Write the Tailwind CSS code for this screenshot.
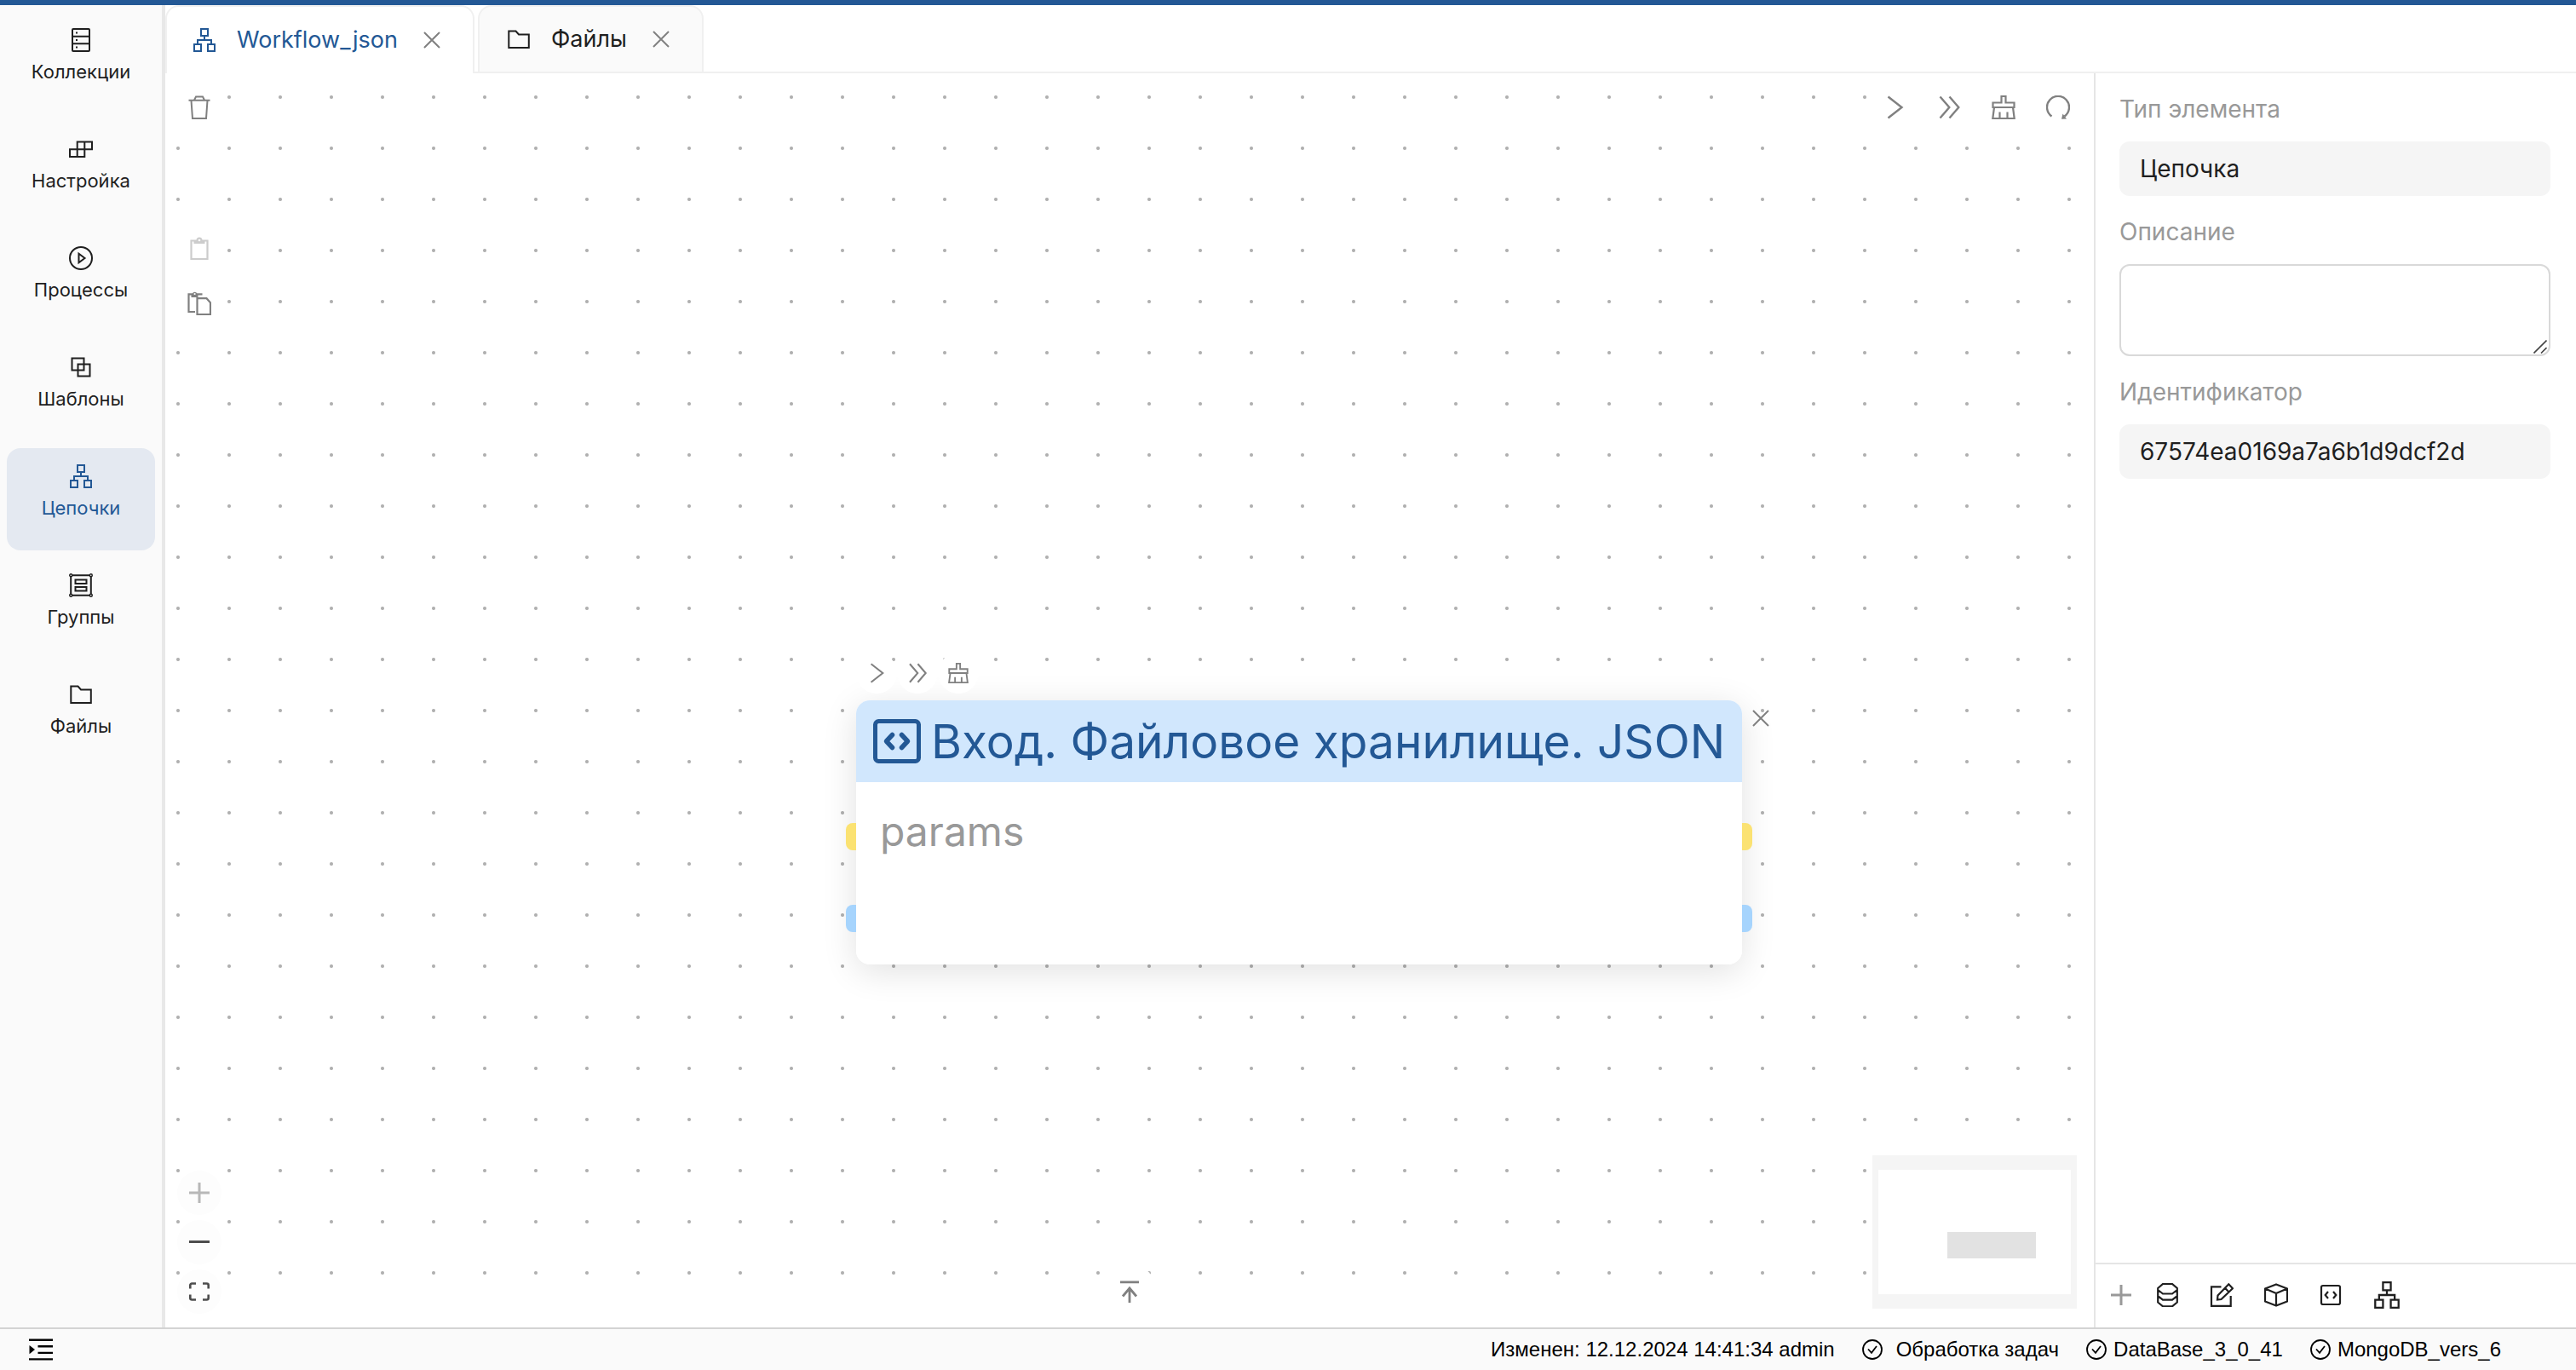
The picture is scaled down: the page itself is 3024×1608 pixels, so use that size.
<!DOCTYPE html>
<html lang="ru">
<head>
<meta charset="utf-8">
<title>Workflow_json</title>
<script src="https://cdn.jsdelivr.net/npm/@tailwindcss/browser@4"></script>
</head>
<body class="flex h-screen flex-col overflow-hidden bg-white font-['Inter',sans-serif] text-[28px] leading-[44px] text-[#1f1f1f]">

<svg class="hidden" aria-hidden="true">
  <defs>
    <symbol id="server" viewBox="0 0 28 28"><g fill="none" stroke="currentColor" stroke-width="2"><rect x="4" y="1" width="20" height="26" rx="1"/><path d="M4 9.7h20M4 18.3h20"/></g><path fill="currentColor" d="M8 4.6h2v2H8zM8 13h2v2H8zM8 21.4h2v2H8z"/></symbol>
    <symbol id="blocks" viewBox="0 0 28 28"><path fill="none" stroke="currentColor" stroke-width="2" d="M9.7 5.5H27v8.7H9.7zM1 14.2h17.3v8.7H1zM18.3 5.5v8.7M9.7 14.2v8.7"/></symbol>
    <symbol id="process" viewBox="0 0 28 28"><g fill="none" stroke="currentColor" stroke-width="2"><circle cx="14" cy="14" r="13"/><path d="M11.5 8.8v10.4l7-5.2z"/></g></symbol>
    <symbol id="templates" viewBox="0 0 28 28"><path fill="none" stroke="currentColor" stroke-width="2" d="M3.5 3.5h14v14h-14zM10.500 10.500h14v14h-14z"/></symbol>
    <symbol id="sitemap" viewBox="0 0 28 28"><path fill="none" stroke="currentColor" stroke-width="2" d="M10 1h8v8h-8zM2 19h8v8H2zM18 19h8v8h-8zM14 9v5M6 19v-5h16v5"/></symbol>
    <symbol id="groups" viewBox="0 0 28 28"><g fill="none" stroke="currentColor"><path stroke-width="2" d="M2.200 2.200h23.600v23.600H2.200zM7.500 7.500h13v4.500h-13zM7.500 16h13v4.500h-13z"/></g><g fill="#fafafa" stroke="currentColor" stroke-width="1.400"><circle cx="2.200" cy="2.200" r="1.500"/><circle cx="25.800" cy="2.200" r="1.500"/><circle cx="2.200" cy="25.800" r="1.500"/><circle cx="25.800" cy="25.800" r="1.500"/></g></symbol>
    <symbol id="folder" viewBox="0 0 28 28"><path fill="none" stroke="currentColor" stroke-width="2" d="M2.300 4.500h8.200l3.500 4h11.800v15.500H2.300z"/></symbol>
    <symbol id="close" viewBox="0 0 20 20"><path fill="none" stroke="currentColor" stroke-width="2" d="M1 1l18 18M19 1L1 19"/></symbol>
    <symbol id="trash" viewBox="0 0 28 28"><path fill="none" stroke="currentColor" stroke-width="2" d="M1.500 5.800h25M8 5.500l2-4h8l2 4M4.500 6L6 27h16L23.500 6"/></symbol>
    <symbol id="clipboard" viewBox="0 0 28 28"><path fill="none" stroke="currentColor" stroke-width="2.200" d="M4.500 4.500h19V26h-19z"/><path fill="currentColor" d="M7.500 4h3a3.500 3.500 0 0 1 7 0h3v4h-13z"/><circle cx="14" cy="4" r="1.300" fill="#fff"/></symbol>
    <symbol id="paste" viewBox="0 0 28 28"><path fill="none" stroke="currentColor" stroke-width="2.200" d="M9 24H1.500V3.300H17.500M11.500 8.200h11l4.500 5v14H11.500z"/><path fill="currentColor" d="M4.500 3h1.300a2.900 2.900 0 0 1 5.600 0h1.100v4h-8z"/><circle cx="8.600" cy="3" r="1.100" fill="#fff"/></symbol>
    <symbol id="run" viewBox="0 0 28 28"><path fill="none" stroke="currentColor" stroke-width="2.400" d="M6.500 1.500L22.500 14 6.500 26.500"/></symbol>
    <symbol id="run-all" viewBox="0 0 28 28"><path fill="none" stroke="currentColor" stroke-width="2.400" d="M3.500 1.500L14.300 14 3.500 26.500M14.500 1.500L25.300 14 14.500 26.500"/></symbol>
    <symbol id="broom" viewBox="0 0 28 28"><path fill="none" stroke="currentColor" stroke-width="2.200" d="M1.500 8.500h10V1h5v7.500h10v5.500h-25zM3 14L1.300 27h25.400L25 14M9.500 19.500V27M18.500 19.500V27"/></symbol>
    <symbol id="reload" viewBox="0 0 28 28"><path fill="none" stroke="currentColor" stroke-width="2.400" d="M6.500 24.500A13 13 0 1 1 21.500 24.500"/><path fill="currentColor" d="M19.500 21.500l-1.500 6.300 6-.4z"/></symbol>
    <symbol id="plus" viewBox="0 0 24 24"><path fill="none" stroke="currentColor" stroke-width="3" d="M12 0v24M0 12h24"/></symbol>
    <symbol id="minus" viewBox="0 0 24 24"><path fill="none" stroke="currentColor" stroke-width="3" d="M0 11.500h24"/></symbol>
    <symbol id="fit" viewBox="0 0 24 24"><path fill="none" stroke="currentColor" stroke-width="2.600" d="M1.300 8.500V4.500a2 2 0 0 1 2-2H8M16 2.500h4.700a2 2 0 0 1 2 2v4M22.700 15.500v4a2 2 0 0 1-2 2H16M8 21.500H3.300a2 2 0 0 1-2-2v-4"/></symbol>
    <symbol id="to-top" viewBox="0 0 24 28"><path fill="none" stroke="currentColor" stroke-width="2.800" d="M1 2.800h22M12 27V10M4 19.500L12 10l8 9.500"/></symbol>
    <symbol id="database" viewBox="0 0 28 28"><path fill="none" stroke="currentColor" stroke-width="2.200" d="M3.200 6L9 1h11l5.800 5v16.500L20 27.300H9l-5.800-4.800zM3.200 8L9 12.500h11L25.800 8M3.200 15.200L9 19.700h11l5.800-4.500"/></symbol>
    <symbol id="edit" viewBox="0 0 28 28"><path fill="none" stroke="currentColor" stroke-width="2.200" d="M13.500 4.300H2v22.500h22.700V15M9 19.500l.500-5L22.300 1.300l4.700 5L13.500 19zM18 5.800l4.500 4.700"/></symbol>
    <symbol id="cube" viewBox="0 0 28 28"><path fill="none" stroke="currentColor" stroke-width="2.200" stroke-linejoin="round" d="M14 1.400L27 6.600v14.800L14 26.600 1 21.400V6.600zM1 6.600l13 5.300 13-5.300M14 12v14.500"/></symbol>
    <symbol id="code" viewBox="0 0 28 28"><path fill="none" stroke="currentColor" stroke-width="2.200" d="M5 3h18a2 2 0 0 1 2 2v18a2 2 0 0 1-2 2H5a2 2 0 0 1-2-2V5a2 2 0 0 1 2-2zM11 10l-3.300 4 3.300 4M17 10l3.300 4-3.300 4"/></symbol>
    <symbol id="code-wide" viewBox="0 0 56 52"><g fill="none" stroke="currentColor" stroke-width="5"><rect x="2.500" y="2.500" width="51" height="47" rx="4"/><path stroke-width="5.500" stroke-linecap="round" stroke-linejoin="round" d="M22.500 18.500L15.500 26l7 7.500M33.500 18.500l7 7.500-7 7.500"/></g></symbol>
    <symbol id="console" viewBox="0 0 28 28"><path fill="none" stroke="currentColor" stroke-width="2.400" d="M0 2.800h28M10.500 10.300H28M10.500 17.900H28M0 25.400h28"/><path fill="currentColor" d="M.500 9v10.200l6.500-5.100z"/></symbol>
    <symbol id="check" viewBox="0 0 24 24"><g fill="none" stroke="currentColor" stroke-width="1.800"><circle cx="12" cy="12" r="11"/><path d="M7 11.500l4 4.300 6-7.800"/></g></symbol>
    <symbol id="grip" viewBox="0 0 16 16"><path fill="none" stroke="currentColor" stroke-width="1.600" d="M.500 15.500l15-15M9 15.500L15.500 9"/></symbol>
  </defs>
</svg>

<div class="h-[6px] shrink-0 bg-[#235895]"></div>

<div class="flex min-h-0 flex-1">
  <nav class="flex w-[194px] shrink-0 flex-col gap-2 border-r-4 border-[#e8e8e8] bg-[#fafafa] p-2 text-[22px] leading-8">
    <a href="#" class="flex h-[120px] flex-col items-center gap-[7px] rounded-2xl pt-[19px]"><svg class="size-7"><use href="#server"/></svg>Коллекции</a>
    <a href="#" class="flex h-[120px] flex-col items-center gap-[7px] rounded-2xl pt-[19px]"><svg class="size-7"><use href="#blocks"/></svg>Настройка</a>
    <a href="#" class="flex h-[120px] flex-col items-center gap-[7px] rounded-2xl pt-[19px]"><svg class="size-7"><use href="#process"/></svg>Процессы</a>
    <a href="#" class="flex h-[120px] flex-col items-center gap-[7px] rounded-2xl pt-[19px]"><svg class="size-7"><use href="#templates"/></svg>Шаблоны</a>
    <a href="#" aria-current="page" class="flex h-[120px] flex-col items-center gap-[7px] rounded-2xl bg-[#e4e9f1] pt-[19px] text-[#235895]"><svg class="size-7"><use href="#sitemap"/></svg>Цепочки</a>
    <a href="#" class="flex h-[120px] flex-col items-center gap-[7px] rounded-2xl pt-[19px]"><svg class="size-7"><use href="#groups"/></svg>Группы</a>
    <a href="#" class="flex h-[120px] flex-col items-center gap-[7px] rounded-2xl pt-[19px]"><svg class="size-7"><use href="#folder"/></svg>Файлы</a>
  </nav>

  <div class="flex min-w-0 flex-1 flex-col">
    <div class="flex h-20 shrink-0 text-[27px]" role="tablist">
      <div class="flex items-center rounded-t-2xl border-2 border-b-0 border-[#f0f0f0] pr-[38px] pl-[30px] text-[#235895]">
        <svg class="size-7"><use href="#sitemap"/></svg>
        <button class="ml-6" role="tab" aria-selected="true">Workflow_json</button>
        <button class="ml-[30px] text-[#808080]" aria-label="Закрыть Workflow_json"><svg class="size-5"><use href="#close"/></svg></button>
      </div>
      <div class="w-1 border-b-2 border-[#f0f0f0]"></div>
      <div class="flex items-center rounded-t-2xl border-2 border-[#f0f0f0] bg-[#fafafa] pr-[38px] pl-8">
        <svg class="size-7"><use href="#folder"/></svg>
        <button class="ml-6" role="tab" aria-selected="false">Файлы</button>
        <button class="ml-[30px] text-[#808080]" aria-label="Закрыть Файлы"><svg class="size-5"><use href="#close"/></svg></button>
      </div>
      <div class="flex-1 border-b-2 border-[#f0f0f0]"></div>
    </div>

    <div class="flex min-h-0 flex-1">
      <main class="relative min-w-0 flex-1 pb-2 text-[#808080]">
        <div class="h-full bg-[radial-gradient(circle,#b0b0b0_1.5px,transparent_2.5px)] bg-[length:60px_60px] bg-[position:-15px_-2px]"></div>

        <div class="absolute top-[14px] left-3 flex h-[52px] w-14 items-center justify-center bg-white"><button aria-label="Удалить"><svg class="size-7"><use href="#trash"/></svg></button></div>
        <div class="absolute top-[180px] left-3 flex flex-col gap-3 bg-white px-[2px]">
          <button class="flex size-[52px] items-center justify-center text-[#cccccc]" aria-label="Вставить" disabled><svg class="size-7"><use href="#clipboard"/></svg></button>
          <button class="flex size-[52px] items-center justify-center" aria-label="Копировать"><svg class="size-7"><use href="#paste"/></svg></button>
        </div>

        <div class="absolute top-[14px] right-4 flex gap-3 bg-white">
          <button class="flex size-[52px] items-center justify-center" aria-label="Запустить"><svg class="size-7"><use href="#run"/></svg></button>
          <button class="flex size-[52px] items-center justify-center" aria-label="Запустить всё"><svg class="size-7"><use href="#run-all"/></svg></button>
          <button class="flex size-[52px] items-center justify-center" aria-label="Очистить"><svg class="size-7"><use href="#broom"/></svg></button>
          <button class="flex size-[52px] items-center justify-center" aria-label="Обновить"><svg class="size-7"><use href="#reload"/></svg></button>
        </div>

        <article class="absolute top-[736px] left-[811px] rounded-2xl shadow-[0_8px_40px_rgba(0,0,0,0.12)]">
          <div class="absolute top-[144px] -left-3 h-8 w-6 rounded-lg bg-[#fbe272]"></div>
          <div class="absolute top-[240px] -left-3 h-8 w-6 rounded-lg bg-[#a6d4fd]"></div>
          <div class="absolute top-[144px] -right-3 h-8 w-6 rounded-lg bg-[#fbe272]"></div>
          <div class="absolute top-[240px] -right-3 h-8 w-6 rounded-lg bg-[#a6d4fd]"></div>
          <div class="relative h-[310px] w-[1040px] overflow-hidden rounded-2xl bg-white">
            <h2 class="flex h-24 items-center gap-3 bg-[#d1e7fd] px-5 text-[55px] leading-[96px] whitespace-nowrap text-[#235895]"><svg class="h-[52px] w-[56px] shrink-0"><use href="#code-wide"/></svg>Вход. Файловое хранилище. JSON</h2>
            <p class="px-7 pt-[26px] text-[48px] leading-[64px] text-[#999999]">params</p>
          </div>
          <div class="absolute -top-14 left-0 flex">
            <button class="flex size-12 items-center justify-center rounded-full bg-white" aria-label="Запустить узел"><svg class="size-6"><use href="#run"/></svg></button>
            <button class="flex size-12 items-center justify-center rounded-full bg-white" aria-label="Запустить цепочку"><svg class="size-6"><use href="#run-all"/></svg></button>
            <button class="flex size-12 items-center justify-center rounded-full bg-white" aria-label="Очистить узел"><svg class="size-6"><use href="#broom"/></svg></button>
          </div>
          <button class="absolute top-[11px] -right-8" aria-label="Удалить узел"><svg class="size-5"><use href="#close"/></svg></button>
        </article>

        <div class="absolute bottom-4 left-[14px] flex flex-col gap-[6px] text-[#4d4d4d]">
          <button class="flex size-[52px] items-center justify-center rounded-full bg-[#fdfdfd] text-[#b8b8b8]" aria-label="Увеличить"><svg class="size-6"><use href="#plus"/></svg></button>
          <button class="flex size-[52px] items-center justify-center rounded-full bg-[#fdfdfd]" aria-label="Уменьшить"><svg class="size-6"><use href="#minus"/></svg></button>
          <button class="flex size-[52px] items-center justify-center rounded-full bg-[#fdfdfd]" aria-label="По размеру"><svg class="size-6"><use href="#fit"/></svg></button>
        </div>

        <div class="absolute inset-x-0 bottom-[10px] flex justify-center"><button class="flex size-16 items-center justify-center rounded-full bg-white" aria-label="Развернуть панель"><svg class="h-7 w-6"><use href="#to-top"/></svg></button></div>

        <div class="absolute right-5 bottom-[22px] h-[180px] w-[240px] bg-[#f5f5f5] px-[7px] py-[17px]">
          <div class="relative h-full bg-white"><div class="absolute top-[73px] left-[81px] h-[31px] w-[104px] bg-[#e2e2e2]"></div></div>
        </div>
      </main>

      <aside class="flex w-[566px] shrink-0 flex-col border-l-2 border-[#e5e5e5]">
        <form class="flex flex-1 flex-col gap-5 pt-5 pr-[30px] pl-7">
          <div class="flex flex-col gap-4">
            <label for="type" class="text-[#999999]">Тип элемента</label>
            <input id="type" value="Цепочка" readonly class="h-16 rounded-xl bg-[#f5f5f5] px-6">
          </div>
          <div class="relative flex flex-col gap-4">
            <label for="description" class="text-[#999999]">Описание</label>
            <textarea id="description" class="h-[108px] resize-none rounded-xl border-2 border-[#d9d9d9] px-6"></textarea>
            <svg class="absolute right-1 bottom-[3px] size-4 text-[#444444]"><use href="#grip"/></svg>
          </div>
          <div class="flex flex-col gap-4">
            <label for="ident" class="text-[#999999]">Идентификатор</label>
            <input id="ident" value="67574ea0169a7a6b1d9dcf2d" readonly class="h-16 rounded-xl bg-[#f5f5f5] px-6">
          </div>
        </form>
        <div class="flex h-[76px] items-center gap-9 border-t-2 border-[#e5e5e5] pb-[2px] pl-[18px]">
          <button class="mr-[-8px] text-[#999999]" aria-label="Добавить"><svg class="size-6"><use href="#plus"/></svg></button>
          <button aria-label="База данных"><svg class="size-7"><use href="#database"/></svg></button>
          <button aria-label="Правка"><svg class="size-7"><use href="#edit"/></svg></button>
          <button aria-label="Объект"><svg class="size-7"><use href="#cube"/></svg></button>
          <button aria-label="Код"><svg class="size-7"><use href="#code"/></svg></button>
          <button aria-label="Цепочка"><svg class="size-8"><use href="#sitemap"/></svg></button>
        </div>
      </aside>
    </div>
  </div>
</div>

<footer class="flex h-[50px] shrink-0 items-center gap-8 border-t-2 border-[#d3d3d3] bg-[#fafafa] pr-[88px] pl-[34px] font-['Liberation_Sans',sans-serif] text-[24px] leading-8 text-black">
  <button class="mr-auto" aria-label="Консоль"><svg class="size-7"><use href="#console"/></svg></button>
  <span>Изменен: 12.12.2024 14:41:34 admin</span>
  <span class="flex items-center gap-4"><svg class="size-6"><use href="#check"/></svg>Обработка задач</span>
  <span class="flex items-center gap-2"><svg class="size-6"><use href="#check"/></svg>DataBase_3_0_41</span>
  <span class="flex items-center gap-2"><svg class="size-6"><use href="#check"/></svg>MongoDB_vers_6</span>
</footer>
</body>
</html>
